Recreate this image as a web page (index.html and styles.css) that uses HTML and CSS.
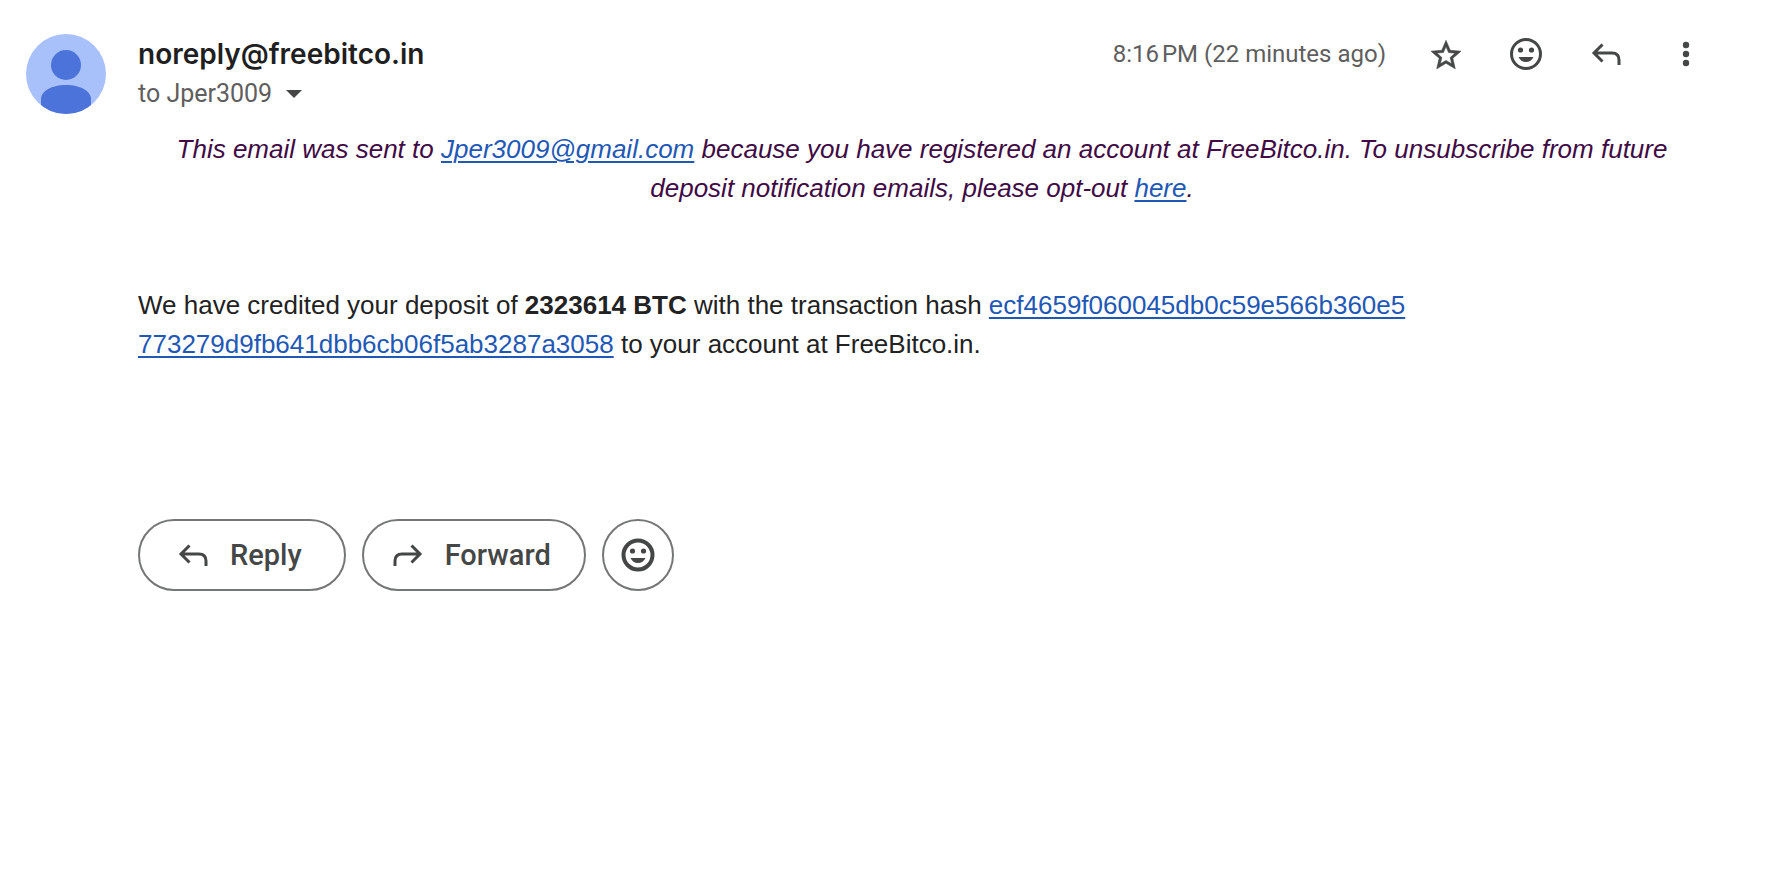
FILE: index.html
```html
<!DOCTYPE html>
<html lang="en">
<head>
<meta charset="utf-8">
<meta name="viewport" content="width=device-width, initial-scale=1">
<title>Deposit notification</title>
<link rel="stylesheet" href="styles.css">
</head>
<body>
<svg class="sprite" aria-hidden="true">
  <symbol id="reply" viewBox="0 0 36 36">
    <path d="M14.5 8.500 6 17l8.500 8.500M6 17h18q7 0 7 7v5" fill="none" stroke="currentColor"/>
  </symbol>
  <symbol id="smile" viewBox="0 0 36 36">
    <circle cx="18" cy="18" r="14.500" fill="none" stroke="currentColor"/>
    <circle cx="12.500" cy="14" r="2.600" fill="currentColor"/>
    <circle cx="23.500" cy="14" r="2.600" fill="currentColor"/>
    <path d="M10.500 21h15c-1.300 3-4.200 5-7.500 5s-6.200-2-7.500-5z" fill="currentColor"/>
  </symbol>
</svg>
<article class="message">
  <svg class="avatar" viewBox="0 0 80 80" role="img" aria-label="Sender">
    <clipPath id="disc"><circle cx="40" cy="40" r="40"/></clipPath>
    <g clip-path="url(#disc)">
      <path d="M0 0h80v80H0z" fill="#a8c1fa"/>
      <circle cx="40" cy="31" r="15" fill="#4b73da"/>
      <path d="M15 80V65C15 57 26 51 40 51s25 6 25 14v15z" fill="#4b73da"/>
    </g>
  </svg>
  <div class="content">
    <header class="header">
      <div class="sender">
        <h1 class="name">noreply@freebitco.in</h1>
        <button class="recipient" type="button">to Jper3009
          <svg class="caret" viewBox="0 0 16 8" aria-hidden="true"><path d="M0 0h16L8 8z" fill="#444746"/></svg>
        </button>
      </div>
      <div class="meta">
        <time class="time">8:16&#8239;PM (22 minutes ago)</time>
        <div class="actions">
          <button class="icon-button" type="button" aria-label="Star">
            <svg class="icon" viewBox="0 0 24 24"><path d="M22 9.240l-7.190-.620L12 2 9.190 8.630 2 9.240l5.460 4.730L5.820 21 12 17.270 18.180 21l-1.630-7.030L22 9.240zM12 15.400l-3.760 2.270 1-4.280-3.320-2.880 4.380-.380L12 6.100l1.710 4.040 4.380.380-3.320 2.880 1 4.280L12 15.400z" transform="translate(0 .9)" fill="currentColor" stroke="currentColor" stroke-width=".4"/></svg>
          </button>
          <button class="icon-button" type="button" aria-label="Add reaction"><svg class="icon"><use href="#smile"/></svg></button>
          <button class="icon-button" type="button" aria-label="Reply"><svg class="icon"><use href="#reply"/></svg></button>
          <button class="icon-button" type="button" aria-label="More">
            <svg class="icon" viewBox="0 0 36 36"><g fill="currentColor"><circle cx="18" cy="9" r="3.200"/><circle cx="18" cy="18" r="3.200"/><circle cx="18" cy="27" r="3.200"/></g></svg>
          </button>
        </div>
      </div>
    </header>
    <div class="body">
      <p class="notice">This email was sent to <a href="mailto:Jper3009@gmail.com">Jper3009@gmail.com</a> because you have registered an account at FreeBitco.in. To unsubscribe from future deposit notification emails, please opt-out <a href="#optout">here</a>.</p>
      <p class="text">We have credited your deposit of <b>2323614 BTC</b> with the transaction hash <a href="#transaction">ecf4659f060045db0c59e566b360e5<wbr>773279d9fb641dbb6cb06f5ab3287a3058</a> to your account at FreeBitco.in.</p>
    </div>
    <footer class="footer">
      <button class="pill" type="button"><svg class="icon"><use href="#reply"/></svg>Reply</button>
      <button class="pill pill-forward" type="button"><svg class="icon icon-flip"><use href="#reply"/></svg>Forward</button>
      <button class="pill pill-round" type="button" aria-label="Add reaction"><svg class="icon"><use href="#smile"/></svg></button>
    </footer>
  </div>
</article>
</body>
</html>
```
FILE: styles.css
```css
* { box-sizing: border-box; }
body {
  margin: 0;
  background: #fff;
  color: #222;
  font-family: Roboto, "Liberation Sans", sans-serif;
}
button {
  margin: 0;
  padding: 0;
  border: 0;
  background: none;
  color: #444746;
  font: inherit;
  cursor: pointer;
}
.sprite { display: none; }
.message {
  display: flex;
  gap: 32px;
  padding: 34px 64px 40px 26px;
}
.avatar {
  flex: none;
  width: 80px;
  height: 80px;
}
.content { flex: 1; min-width: 0; }
.header {
  display: flex;
  justify-content: space-between;
  align-items: flex-start;
}
.name {
  margin: 0;
  color: #1f1f1f;
  font-family: Inter, Roboto, sans-serif;
  font-size: 28px;
  font-weight: 600;
  line-height: 40px;
}
.recipient {
  display: flex;
  align-items: center;
  gap: 14px;
  color: #5e5e5e;
  font-size: 25px;
  line-height: 40px;
}
.caret { width: 16px; height: 8px; }
.meta {
  display: flex;
  align-items: center;
  gap: 40px;
}
.time {
  color: #5e5e5e;
  font-size: 24px;
  line-height: 40px;
}
.actions { display: flex; gap: 40px; }
.icon-button {
  display: grid;
  place-items: center;
  width: 40px;
  height: 40px;
}
.icon {
  display: block;
  width: 36px;
  height: 36px;
  stroke-width: 3px;
}
.icon-flip { transform: scaleX(-1); }
.body {
  padding-top: 16px;
  font-family: "Liberation Sans", Arial, sans-serif;
  font-size: 26px;
  line-height: 39px;
}
.body p { margin: 0; }
.body a {
  color: #2258b5;
  text-decoration-thickness: 2px;
  text-underline-offset: 3px;
}
.body .notice {
  margin-bottom: 78px;
  color: #400a45;
  font-style: italic;
  text-align: center;
}
.footer {
  display: flex;
  gap: 16px;
  margin-top: 155px;
}
.pill {
  display: flex;
  align-items: center;
  justify-content: center;
  gap: 19px;
  height: 72px;
  padding: 0 42px 0 35px;
  border: 2px solid #747775;
  border-radius: 36px;
  font-size: 29px;
  font-weight: 500;
}
.pill-forward { padding: 0 33px 0 26px; }
.pill-round {
  width: 72px;
  padding: 0;
}
.pill-round .icon { stroke-width: 4px; }
```
